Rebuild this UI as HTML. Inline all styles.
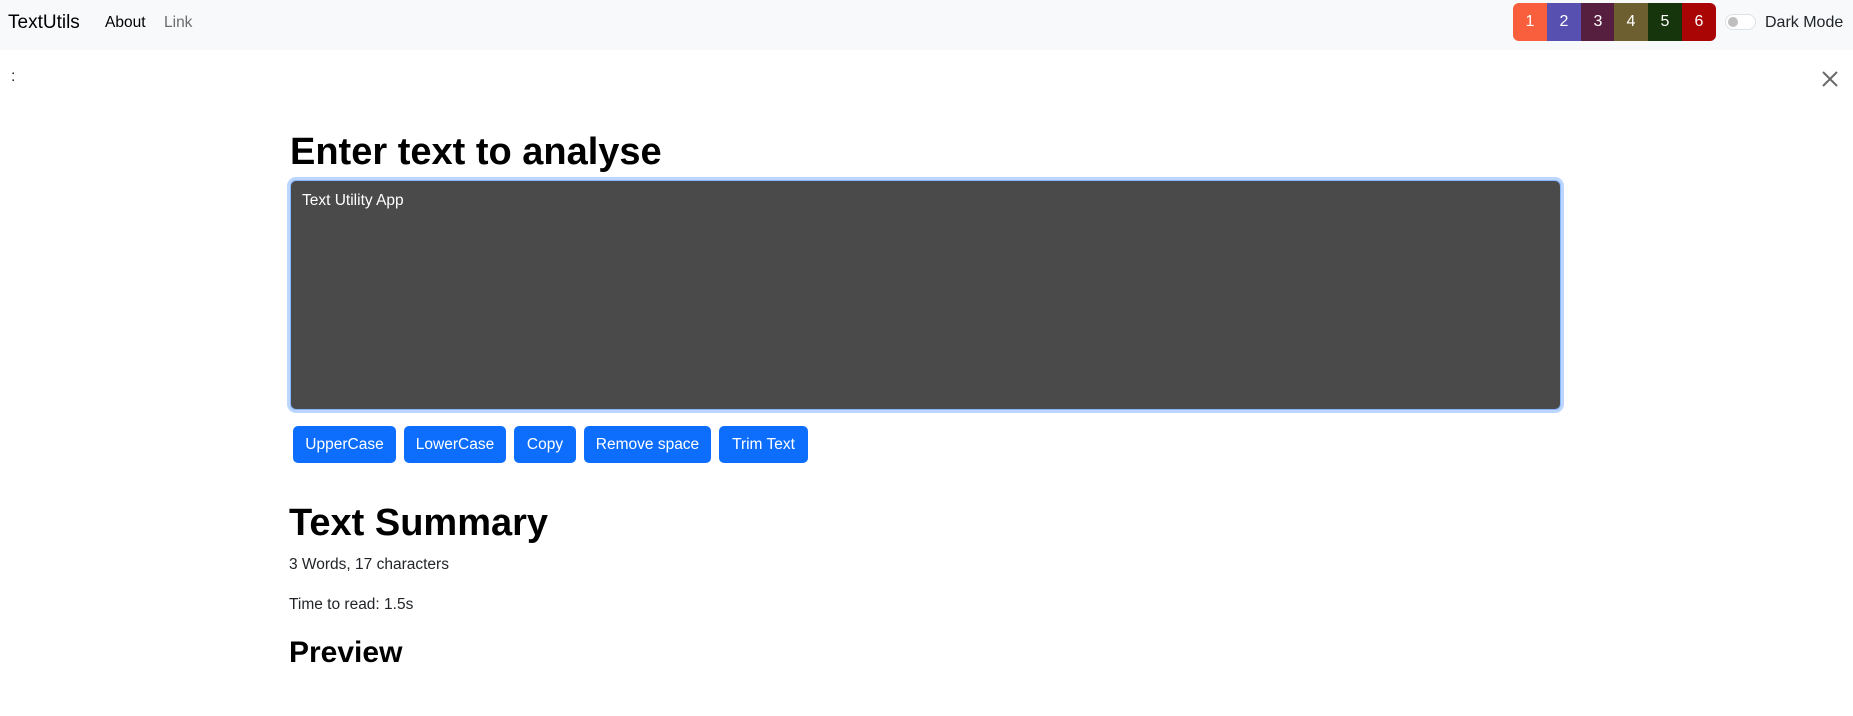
<!DOCTYPE html>
<html><head><meta charset="utf-8"><style>
*{box-sizing:border-box;margin:0;padding:0}
body{width:1853px;height:716px;overflow:hidden;background:#fff;font-family:"Liberation Sans",sans-serif;color:#212529;position:relative}
.nav{position:absolute;left:0;top:0;width:1853px;height:50px;background:#f8f9fa}
.abs{position:absolute;white-space:nowrap}
.sw{position:absolute;top:3px;height:38px;width:34px;color:#fff;font-size:16px;text-align:center;line-height:38px}
.btn{position:absolute;top:426px;height:37px;background:#0d6efd;color:#fff;border-radius:5px;font-size:15.5px;text-align:center;line-height:37px}
</style></head><body>
<div class="nav"></div>
<div class="abs" style="left:8px;top:12px;font-size:19px;color:#000">TextUtils</div>
<div class="abs" style="left:105px;top:14px;font-size:15.5px;color:#000">About</div>
<div class="abs" style="left:164px;top:14px;font-size:15.5px;color:#6c6c6c">Link</div>
<div class="sw" style="left:1513px;background:#f95e3d;border-radius:6px 0 0 6px">1</div>
<div class="sw" style="left:1547px;background:#5850b1">2</div>
<div class="sw" style="left:1581px;background:#571f3f">3</div>
<div class="sw" style="left:1614px;background:#6d5f2f">4</div>
<div class="sw" style="left:1648px;background:#17350c">5</div>
<div class="sw" style="left:1682px;background:#a90505;border-radius:0 6px 6px 0">6</div>
<div class="abs" style="left:1725px;top:14px;width:31px;height:16px;border:1px solid #dee2e6;border-radius:8px;background:#fff"><div style="position:absolute;left:2px;top:2px;width:10px;height:10px;border-radius:50%;background:#bfbfbf"></div></div>
<div class="abs" style="left:1765px;top:14px;font-size:16px;color:#212529">Dark Mode</div>
<div class="abs" style="left:11px;top:68px;font-size:16px">:</div>
<svg class="abs" style="left:1821px;top:70px" width="18" height="18" viewBox="0 0 18 18"><path d="M2 2L16 16M16 2L2 16" stroke="#6a6a6a" stroke-width="2"/></svg>
<div class="abs" style="left:290px;top:131px;font-size:38px;font-weight:bold;color:#000">Enter text to analyse</div>
<div class="abs" style="left:287px;top:177px;width:1277px;height:236px;border-radius:9px;background:#bcd6fd"></div>
<div class="abs" style="left:290px;top:180px;width:1271px;height:230px;border-radius:6px;background:#4a4a4a;border:1px solid #86b7fe"></div>
<div class="abs" style="left:302px;top:192px;font-size:15.5px;color:#fff">Text Utility App</div>
<div class="btn" style="left:293px;width:103px">UpperCase</div>
<div class="btn" style="left:404px;width:102px">LowerCase</div>
<div class="btn" style="left:514px;width:62px">Copy</div>
<div class="btn" style="left:584px;width:127px">Remove space</div>
<div class="btn" style="left:719px;width:89px">Trim Text</div>
<div class="abs" style="left:289px;top:502px;font-size:38px;font-weight:bold;color:#000">Text Summary</div>
<div class="abs" style="left:289px;top:556px;font-size:15.5px">3 Words, 17 characters</div>
<div class="abs" style="left:289px;top:596px;font-size:15.5px">Time to read: 1.5s</div>
<div class="abs" style="left:289px;top:636px;font-size:30px;font-weight:bold;color:#000">Preview</div>
</body></html>
